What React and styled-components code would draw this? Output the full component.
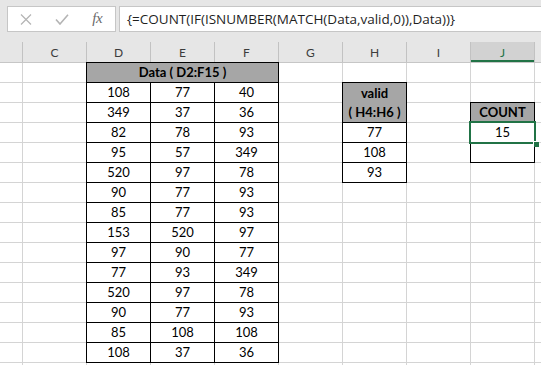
import React from 'react';
import styled, { createGlobalStyle, css } from 'styled-components';

const GlobalStyle = createGlobalStyle`
  html, body { margin: 0; padding: 0; background: #fff; }
  body { width: 541px; height: 365px; overflow: hidden; font-family: Lato, "Liberation Sans", sans-serif; }
`;

const Window = styled.div`
  width: 541px;
  height: 365px;
  overflow: hidden;
  background: #fff;
`;

const FormulaBar = styled.div`
  display: flex;
  align-items: flex-start;
  gap: 3px;
  height: 42px;
  box-sizing: border-box;
  padding: 6px 0 0 7px;
  background: #e6e6e6;
`;

const ButtonBox = styled.div`
  display: flex;
  align-items: center;
  width: 109px;
  height: 26px;
  box-sizing: border-box;
  background: #fff;
  border: 1px solid #c6c6c6;
`;

const BarButton = styled.div`
  display: flex;
  align-items: center;
  justify-content: center;
  width: 36px;
  height: 24px;
  color: ${(p) => p.$color || '#b4b4b4'};
`;

const FxLabel = styled.span`
  font-family: "Liberation Serif", "DejaVu Serif", serif;
  font-style: italic;
  font-size: 15px;
  color: #6a6a6a;
  letter-spacing: -0.5px;
  margin-top: -2px;
`;

const FormulaInput = styled.div`
  flex: 1;
  height: 26px;
  box-sizing: border-box;
  background: #fff;
  border: 1px solid #c6c6c6;
  border-right: none;
  padding-left: 7px;
  font-family: "Open Sans", "Noto Sans", sans-serif;
  font-size: 13.5px;
  line-height: 24px;
  color: #1f1f1f;
  white-space: nowrap;
  overflow: hidden;
`;

const columns = `22px repeat(8, 63px) 6px`;

const HeaderRow = styled.div`
  display: grid;
  grid-template-columns: ${columns};
  column-gap: 1px;
  height: 20px;
  background: #c2c2c2;
  border-bottom: 1px solid #c6c6c6;
`;

const ColHeader = styled.div`
  display: flex;
  align-items: center;
  justify-content: center;
  background: ${(p) => (p.$selected ? '#d2d2d2' : '#e6e6e6')};
  color: ${(p) => (p.$selected ? '#217346' : '#3c3c3c')};
  font-size: 12px;
  ${(p) =>
    p.$selected &&
    css`
      box-shadow: inset 0 -2px 0 #217346;
    `}
`;

const Sheet = styled.div`
  display: grid;
  grid-template-columns: ${columns};
  grid-auto-rows: 19px;
  gap: 1px;
  background: #d4d4d4;
`;

const Cell = styled.div`
  position: relative;
  background: ${(p) => (p.$fill ? '#a6a6a6' : '#fff')};
  grid-column: span ${(p) => p.$colSpan || 1};
  grid-row: span ${(p) => p.$rowSpan || 1};
  display: flex;
  flex-direction: column;
  align-items: center;
  justify-content: center;
  font-size: 13px;
  line-height: 19px;
  color: #000;
  font-weight: ${(p) => (p.$bold ? 700 : 400)};
  white-space: nowrap;
  ${(p) =>
    p.$boxed &&
    css`
      outline: 1px solid #000;
    `}
`;

const Selection = styled.div`
  position: absolute;
  top: -2px;
  left: -2px;
  right: -2px;
  bottom: -2px;
  border: 2px solid #217346;
  z-index: 5;
  pointer-events: none;
`;

const FillHandle = styled.div`
  position: absolute;
  right: -5px;
  bottom: -5px;
  width: 5px;
  height: 5px;
  background: #217346;
  border-left: 1px solid #fff;
  border-top: 1px solid #fff;
`;

const data = [
  [108, 77, 40],
  [349, 37, 36],
  [82, 78, 93],
  [95, 57, 349],
  [520, 97, 78],
  [90, 77, 93],
  [85, 77, 93],
  [153, 520, 97],
  [97, 90, 77],
  [77, 93, 349],
  [520, 97, 78],
  [90, 77, 93],
  [85, 108, 108],
  [108, 37, 36],
];
const valid = [77, 108, 93];
const letters = ['', 'C', 'D', 'E', 'F', 'G', 'H', 'I', 'J', ''];

function buildRows() {
  const rows = [];
  for (let r = 1; r <= 16; r++) {
    const cells = [];
    cells.push({ key: 'B' }, { key: 'C' });
    if (r === 1) {
      cells.push({ key: 'D', lines: ['Data ( D2:F15 )'], head: true, colSpan: 3 });
    } else if (r <= 15) {
      data[r - 2].forEach((v, i) => cells.push({ key: 'DEF'[i], lines: [v], boxed: true }));
    } else {
      cells.push({ key: 'D' }, { key: 'E' }, { key: 'F' });
    }
    cells.push({ key: 'G' });
    if (r === 2) {
      cells.push({ key: 'H', head: true, rowSpan: 2, lines: ['valid', '( H4:H6 )'] });
    } else if (r >= 4 && r <= 6) {
      cells.push({ key: 'H', lines: [valid[r - 4]], boxed: true });
    } else if (r !== 3) {
      cells.push({ key: 'H' });
    }
    cells.push({ key: 'I' });
    if (r === 3) cells.push({ key: 'J', head: true, lines: ['COUNT'] });
    else if (r === 4) cells.push({ key: 'J', lines: [15], boxed: true, selected: true });
    else if (r === 5) cells.push({ key: 'J', boxed: true });
    else cells.push({ key: 'J' });
    cells.push({ key: 'K' });
    rows.push(cells.map((c) => ({ ...c, id: `${c.key}${r}` })));
  }
  return rows;
}

const CrossIcon = () => (
  <svg width="12" height="11" viewBox="0 0 12 11">
    <path d="M1 0.5 L11 10.5 M11 0.5 L1 10.5" stroke="currentColor" strokeWidth="1.2" fill="none" />
  </svg>
);

const CheckIcon = () => (
  <svg width="14" height="11" viewBox="0 0 14 11">
    <path d="M1 5.5 L5 10 L13 0.8" stroke="currentColor" strokeWidth="1.6" fill="none" />
  </svg>
);

export default function App() {
  const rows = buildRows();
  return (
    <Window>
      <GlobalStyle />
      <FormulaBar>
        <ButtonBox>
          <BarButton>
            <CrossIcon />
          </BarButton>
          <BarButton>
            <CheckIcon />
          </BarButton>
          <BarButton $color="#6a6a6a">
            <FxLabel>fx</FxLabel>
          </BarButton>
        </ButtonBox>
        <FormulaInput>{'{=COUNT(IF(ISNUMBER(MATCH(Data,valid,0)),Data))}'}</FormulaInput>
      </FormulaBar>
      <HeaderRow>
        {letters.map((l, i) => (
          <ColHeader key={i} $selected={l === 'J'}>
            {l}
          </ColHeader>
        ))}
      </HeaderRow>
      <Sheet>
        {rows.flat().map((c) => (
          <Cell
            key={c.id}
            $fill={c.head}
            $bold={c.head}
            $boxed={c.boxed || c.head}
            $colSpan={c.colSpan}
            $rowSpan={c.rowSpan}
          >
            {(c.lines || []).map((t, i) => (
              <span key={i}>{t}</span>
            ))}
            {c.selected && (
              <Selection>
                <FillHandle />
              </Selection>
            )}
          </Cell>
        ))}
      </Sheet>
    </Window>
  );
}
